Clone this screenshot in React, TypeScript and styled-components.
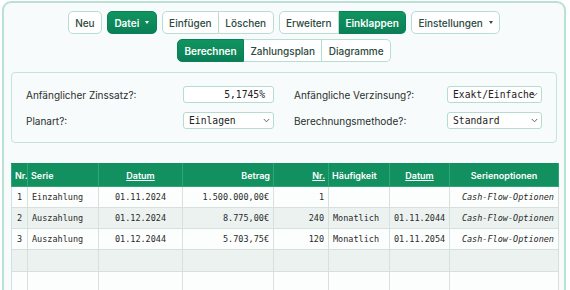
import styled, { createGlobalStyle, css } from "styled-components";

const GlobalStyle = createGlobalStyle`
  body {
    margin: 0;
    background: #ffffff;
    font-family: Inter, "Noto Sans", sans-serif;
    color: #1f2d28;
  }
`;

const line = "#b6ded1";

const Card = styled.div`
  margin: 1px 4px 0 2px;
  border: 2px solid #b9e2d4;
  border-bottom: none;
  border-radius: 9px 9px 0 0;
  background: #f8fbfb;
  padding: 8px 7px 0 7px;
  height: 290px;
  box-sizing: border-box;
`;

const Toolbar = styled.div`
  display: flex;
  flex-direction: column;
  align-items: center;
  gap: 5px;
`;

const ToolRow = styled.div`
  display: flex;
  gap: 5px;
`;

const Group = styled.div`
  display: flex;
  & > button {
    border-radius: 0;
  }
  & > button + button {
    border-left: none;
  }
  & > button:first-child {
    border-radius: 5px 0 0 5px;
  }
  & > button:last-child {
    border-radius: 0 5px 5px 0;
  }
`;

const Button = styled.button<{ $active?: boolean }>`
  height: 23px;
  padding: 0 6.4px;
  font-family: Inter, sans-serif;
  font-size: 10px;
  font-weight: 500;
  border-radius: 5px;
  border: 1px solid ${line};
  background: #ffffff;
  color: #2b4a40;
  display: flex;
  align-items: center;
  gap: 6px;
  ${(p) =>
    p.$active &&
    css`
      background: linear-gradient(180deg, #10955f, #0b7f57);
      border-color: #0b7f57;
      color: #ffffff;
      font-weight: 600;
    `}
`;

const Caret = styled.span<{ $light?: boolean }>`
  width: 0;
  height: 0;
  border-left: 2.5px solid transparent;
  border-right: 2.5px solid transparent;
  border-top: 3px solid ${(p) => (p.$light ? "#ffffff" : "#3a4a44")};
`;

const Panel = styled.div`
  margin-top: 10px;
  border: 1px solid #c6e3d9;
  border-radius: 4px;
  padding: 13px 14px 13px 14px;
  display: grid;
  grid-template-columns: 1fr 1fr;
  column-gap: 20px;
  row-gap: 9px;
`;

const Field = styled.div`
  display: flex;
  align-items: center;
  justify-content: space-between;
`;

const Label = styled.span`
  font-size: 10px;
  color: #27302d;
`;

const Box = styled.div<{ $w: number; $right?: boolean }>`
  position: relative;
  width: ${(p) => p.$w}px;
  height: 17px;
  box-sizing: border-box;
  border: 1px solid #b5dccf;
  border-radius: 3px;
  background: #ffffff;
  font-family: "DejaVu Sans Mono", monospace;
  font-size: 9.7px;
  color: #222;
  display: flex;
  align-items: center;
  justify-content: ${(p) => (p.$right ? "flex-end" : "flex-start")};
  padding: ${(p) => (p.$right ? "0 8px 0 5px" : "0 0 0 5px")};
  white-space: nowrap;
  overflow: hidden;
`;

const ChevronWrap = styled.span`
  position: absolute;
  right: 3px;
  top: 5px;
  display: flex;
`;

const Chevron = () => (
  <ChevronWrap>
    <svg width="7" height="5" viewBox="0 0 7 5">
      <path d="M0.8 1 L3.5 3.8 L6.2 1" fill="none" stroke="#555" strokeWidth="0.9" />
    </svg>
  </ChevronWrap>
);

const Table = styled.table`
  margin-top: 20px;
  width: 100%;
  border-collapse: collapse;
  table-layout: fixed;
  font-size: 8.5px;
`;

const Th = styled.th<{ $align?: string; $u?: boolean }>`
  background: #12905f;
  color: #ffffff;
  font-family: Inter, sans-serif;
  font-size: 9px;
  font-weight: 600;
  height: 22px;
  padding: 0 3px;
  text-align: ${(p) => p.$align || "left"};
  text-decoration: ${(p) => (p.$u ? "underline" : "none")};
  border: 1px solid #2fa67a;
  border-top-color: #12905f;
`;

const Tr = styled.tr<{ $shade?: boolean }>`
  background: ${(p) => (p.$shade ? "#ecf2f0" : "#fcfefd")};
`;

const Td = styled.td<{ $align?: string; $italic?: boolean }>`
  height: 20px;
  padding: 0 4px;
  font-family: "DejaVu Sans Mono", monospace;
  color: #2a2a2a;
  text-align: ${(p) => p.$align || "left"};
  font-style: ${(p) => (p.$italic ? "italic" : "normal")};
  border: 1px solid #d6e1de;
  white-space: nowrap;
  overflow: hidden;
`;

const rows = [
  ["1", "Einzahlung", "01.11.2024", "1.500.000,00€", "1", "", ""],
  ["2", "Auszahlung", "01.12.2024", "8.775,00€", "240", "Monatlich", "01.11.2044"],
  ["3", "Auszahlung", "01.12.2044", "5.703,75€", "120", "Monatlich", "01.11.2054"],
];

const App = () => {
  return (
    <>
      <GlobalStyle />
      <Card>
        <Toolbar>
          <ToolRow>
            <Button>Neu</Button>
            <Button $active>
              Datei <Caret $light />
            </Button>
            <Group>
              <Button>Einfügen</Button>
              <Button>Löschen</Button>
            </Group>
            <Group>
              <Button>Erweitern</Button>
              <Button $active>Einklappen</Button>
            </Group>
            <Button>
              Einstellungen <Caret />
            </Button>
          </ToolRow>
          <ToolRow>
            <Group>
              <Button $active>Berechnen</Button>
              <Button>Zahlungsplan</Button>
              <Button>Diagramme</Button>
            </Group>
          </ToolRow>
        </Toolbar>

        <Panel>
          <Field>
            <Label>Anfänglicher Zinssatz?:</Label>
            <Box $w={91} $right>
              5,1745%
            </Box>
          </Field>
          <Field>
            <Label>Anfängliche Verzinsung?:</Label>
            <Box $w={95}>
              Exakt/Einfache
              <Chevron />
            </Box>
          </Field>
          <Field>
            <Label>Planart?:</Label>
            <Box $w={91}>
              Einlagen
              <Chevron />
            </Box>
          </Field>
          <Field>
            <Label>Berechnungsmethode?:</Label>
            <Box $w={95}>
              Standard
              <Chevron />
            </Box>
          </Field>
        </Panel>

        <Table>
          <colgroup>
            <col style={{ width: 16 }} />
            <col style={{ width: 71 }} />
            <col style={{ width: 84 }} />
            <col style={{ width: 91 }} />
            <col style={{ width: 55 }} />
            <col style={{ width: 61 }} />
            <col style={{ width: 60 }} />
            <col style={{ width: 109 }} />
          </colgroup>
          <thead>
            <tr>
              <Th>Nr.</Th>
              <Th>Serie</Th>
              <Th $align="center" $u>
                Datum
              </Th>
              <Th $align="right">Betrag</Th>
              <Th $align="right" $u>
                Nr.
              </Th>
              <Th>Häufigkeit</Th>
              <Th $align="center" $u>
                Datum
              </Th>
              <Th $align="center">Serienoptionen</Th>
            </tr>
          </thead>
          <tbody>
            {rows.map((r, i) => (
              <Tr key={i} $shade={i % 2 === 1}>
                <Td $align="center">{r[0]}</Td>
                <Td>{r[1]}</Td>
                <Td $align="center">{r[2]}</Td>
                <Td $align="right">{r[3]}</Td>
                <Td $align="right">{r[4]}</Td>
                <Td>{r[5]}</Td>
                <Td $align="center">{r[6]}</Td>
                <Td $align="right" $italic>
                  Cash-Flow-Optionen
                </Td>
              </Tr>
            ))}
            {[0, 1].map((i) => (
              <Tr key={"e" + i} $shade={i === 0}>
                {Array.from({ length: 8 }).map((_, j) => (
                  <Td key={j} style={{ height: 21 }} />
                ))}
              </Tr>
            ))}
          </tbody>
        </Table>
      </Card>
    </>
  );
};

export default App;
